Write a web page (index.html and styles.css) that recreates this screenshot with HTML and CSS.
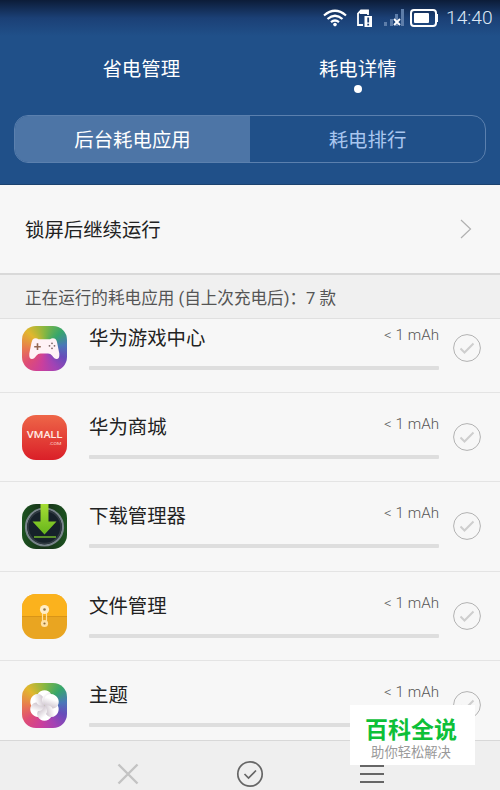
FILE: index.html
```html
<!doctype html>
<html lang="zh-CN">
<head>
    <meta charset="utf-8">
    <title>耗电详情</title>
    <link rel="stylesheet" href="styles.css">
</head>
<body>
    <header>
        <div class="status">
            <svg class="wifi" width="24" height="18" viewBox="0 0 24 18" fill="none" stroke="#fff" stroke-width="2.2">
                <path d="M1 6.5Q12 -3 23 6.5M4.5 10Q12 3.5 19.5 10M8 13.2Q12 9.8 16 13.2"/>
                <circle cx="12" cy="15.6" r="1.8" fill="#fff" stroke="none"/>
            </svg>
            <svg class="sim" width="17" height="19" viewBox="0 0 17 19">
                <path d="M7 16H2V4.5L5 1.5H12V6" fill="none" stroke="#fff" stroke-width="1.8"/>
                <path d="M4 1H12.5V5H4z" fill="#fff"/>
                <path d="M8.5 7H16V18H8.5z" fill="#fff"/>
                <path d="M12.2 8.5V13.5M12.2 14.8V16.6" stroke="#1b3e70" stroke-width="1.8"/>
            </svg>
            <svg class="signal" width="21" height="18" viewBox="0 0 21 18">
                <path d="M0 13H3V17H0zM6 10H9V17H6zM11 5H14V17H11zM17 0H20V17H17z" fill="#5d7da9"/>
                <path d="M10 10L16 16M16 10L10 16" stroke="#fff" stroke-width="1.8"/>
            </svg>
            <svg class="battery" width="29" height="18" viewBox="0 0 29 18">
                <rect x="1" y="1" width="25" height="16" rx="3" fill="none" stroke="#fff" stroke-width="2"/>
                <rect x="4" y="4" width="15" height="10" rx="1" fill="#fff"/>
                <path d="M26 5H28V13H26z" fill="#fff"/>
            </svg>
            <span class="clock">14:40</span>
        </div>
        <nav class="tabs">
            <a>省电管理</a>
            <a class="current">耗电详情</a>
        </nav>
        <div class="switch">
            <span class="on">后台耗电应用</span>
            <span>耗电排行</span>
        </div>
    </header>

    <div class="setting">
        <span>锁屏后继续运行</span>
        <svg width="12" height="20" viewBox="0 0 12 20" fill="none" stroke="#b0b0b0" stroke-width="1.2"><path d="M1 1L10.5 10L1 19"/></svg>
    </div>
    <h2>正在运行的耗电应用 (自上次充电后)：7 款</h2>

    <ul class="apps">
        <li>
            <svg class="icon" viewBox="0 0 45 45">
                <foreignObject width="45" height="45"><div class="rainbow"></div></foreignObject>
                <path d="M12 12.5Q14.5 11.8 16.5 13.2H28Q30 11.8 32.5 12.5Q34.5 13 35.2 17L37.3 27.5Q37.8 33 34.5 33Q32.5 33 30 29.5Q28.5 27.5 26 27.5H18.5Q16 27.5 14.5 29.5Q12 33 10 33Q6.8 33 7.3 27.5L9.5 16.5Q10.2 13 12 12.5z" fill="#fff2f6"/>
                <path d="M15.5 17.3V24M12.2 20.7H18.8" stroke="#926652" stroke-width="1.6"/>
                <g fill="#7c6464"><circle cx="30" cy="17.3" r=".9"/><circle cx="30" cy="22.3" r=".9"/><circle cx="27.5" cy="19.8" r=".9"/><circle cx="32.5" cy="19.8" r=".9"/></g>
            </svg>
            <div class="info">
                <h3>华为游戏中心</h3><em>&lt; 1 mAh</em>
                <div class="bar"></div>
            </div>
            <svg class="check" viewBox="0 0 28 28"><circle cx="14" cy="14" r="13.4"/><path d="M7.5 14.5L11.5 18.5L20.5 9.5"/></svg>
        </li>
        <li>
            <svg class="icon" viewBox="0 0 45 45">
                <defs><linearGradient id="red" x2="0" y2="1"><stop stop-color="#ee6648"/><stop offset="1" stop-color="#da1f28"/></linearGradient></defs>
                <rect width="45" height="45" fill="url(#red)"/>
                <text x="4.8" y="23.2" font-size="9" font-weight="500" textLength="35.5" lengthAdjust="spacingAndGlyphs" fill="#ffe9e2">VMALL</text>
                <text x="27" y="29.8" font-size="4.2" textLength="12.5" lengthAdjust="spacingAndGlyphs" fill="#ffd5cc">.COM</text>
            </svg>
            <div class="info">
                <h3>华为商城</h3><em>&lt; 1 mAh</em>
                <div class="bar"></div>
            </div>
            <svg class="check" viewBox="0 0 28 28"><circle cx="14" cy="14" r="13.4"/><path d="M7.5 14.5L11.5 18.5L20.5 9.5"/></svg>
        </li>
        <li>
            <svg class="icon" viewBox="0 0 45 45">
                <defs>
                    <linearGradient id="green" x2="0" y2="1"><stop stop-color="#a5dd35"/><stop offset="1" stop-color="#66b51b"/></linearGradient>
                    <linearGradient id="moss"><stop stop-color="#1c5320"/><stop offset=".5" stop-color="#183019"/><stop offset="1" stop-color="#1c5320"/></linearGradient>
                </defs>
                <rect width="45" height="45" fill="url(#moss)"/>
                <circle cx="22.5" cy="23" r="18.5" fill="#16212a" stroke="#78848a" stroke-width="2.2"/>
                <circle cx="22.5" cy="23" r="16.5" fill="none" stroke="#303a41" stroke-width="1.5"/>
                <path d="M18.5 0H26.5V17.5H34.5L22.5 30.5L10.5 17.5H18.5z" fill="url(#green)"/>
                <path d="M12 33H34" stroke="#71b52c" stroke-width="1.5"/>
            </svg>
            <div class="info">
                <h3>下载管理器</h3><em>&lt; 1 mAh</em>
                <div class="bar"></div>
            </div>
            <svg class="check" viewBox="0 0 28 28"><circle cx="14" cy="14" r="13.4"/><path d="M7.5 14.5L11.5 18.5L20.5 9.5"/></svg>
        </li>
        <li>
            <svg class="icon" viewBox="0 0 45 45">
                <rect width="45" height="45" fill="#e9a521"/>
                <rect width="45" height="22" fill="#fbb21d"/>
                <path d="M0 22.5H45" stroke="#d99518"/>
                <path d="M20.5 16V29M24.5 16V29" stroke="#ffe0a0" stroke-width="1.2"/>
                <circle cx="22.5" cy="15.5" r="4.6" fill="#ffedc6"/>
                <circle cx="22.5" cy="29.5" r="3.6" fill="#ffe1a4"/>
                <circle cx="22.5" cy="15.5" r="1.3" fill="#8d7650"/>
                <circle cx="22.5" cy="29.5" r="1.1" fill="#8d6c3b"/>
            </svg>
            <div class="info">
                <h3>文件管理</h3><em>&lt; 1 mAh</em>
                <div class="bar"></div>
            </div>
            <svg class="check" viewBox="0 0 28 28"><circle cx="14" cy="14" r="13.4"/><path d="M7.5 14.5L11.5 18.5L20.5 9.5"/></svg>
        </li>
        <li>
            <svg class="icon" viewBox="0 0 45 45">
                <defs>
                    <linearGradient id="petal" x1="0" y1="0" x2=".9" y2="1"><stop stop-color="#fff"/><stop offset=".4" stop-color="#fff"/><stop offset="1" stop-color="#bcaebb"/></linearGradient>
                    <path id="leaf" d="M22.5 22.5C16 21 13 16 15.5 11.5C18.5 6 26.5 6 29 11C30.2 13.5 30 15.5 29 17C26.5 16.5 23.5 18.5 22.5 22.5z" fill="url(#petal)"/>
                </defs>
                <foreignObject width="45" height="45"><div class="rainbow"></div></foreignObject>
                <use href="#leaf"/>
                <use href="#leaf" transform="rotate(-60 22.5 22.5)"/>
                <use href="#leaf" transform="rotate(-120 22.5 22.5)"/>
                <use href="#leaf" transform="rotate(-180 22.5 22.5)"/>
                <use href="#leaf" transform="rotate(-240 22.5 22.5)"/>
                <use href="#leaf" transform="rotate(-300 22.5 22.5)"/>
            </svg>
            <div class="info">
                <h3>主题</h3><em>&lt; 1 mAh</em>
                <div class="bar"></div>
            </div>
            <svg class="check" viewBox="0 0 28 28"><circle cx="14" cy="14" r="13.4"/><path d="M7.5 14.5L11.5 18.5L20.5 9.5"/></svg>
        </li>
    </ul>

    <footer>
        <svg width="22" height="28" viewBox="0 0 22 28" fill="none" stroke="#c3c3c3" stroke-width="2.4"><path d="M1.5 4.5L20.5 23.5M20.5 4.5L1.5 23.5"/></svg>
        <svg width="28" height="28" viewBox="0 0 28 28" fill="none" stroke="#666" stroke-width="1.7"><circle cx="14" cy="14" r="12.2"/><path d="M8.5 14L12.5 18L20 10.5"/></svg>
        <svg width="24" height="28" viewBox="0 0 24 28" stroke="#666" stroke-width="2"><path d="M0 6H24M0 14H24M0 22H24"/></svg>
    </footer>

    <div class="watermark">
        <strong>百科全说</strong>
        <span>助你轻松解决</span>
    </div>
</body>
</html>
```

FILE: styles.css
```css
* {
    margin: 0;
    padding: 0;
    box-sizing: border-box;
}

body {
    display: flex;
    flex-direction: column;
    position: relative;
    width: 500px;
    height: 790px;
    overflow: hidden;
    background: #f7f7f7;
    color: #222;
    font: 19.4px/28px Roboto, "Noto Sans CJK SC", sans-serif;
}

header {
    height: 185px;
    background: linear-gradient(#0c1c38, #1b4076 18px, #205089 36px);
    border-bottom: 1px solid #1b426f;
    color: #fff;
}

.status {
    display: flex;
    align-items: center;
    justify-content: flex-end;
    height: 36px;
    padding-right: 8px;
}

.sim {
    margin-left: 9px;
}

.signal {
    margin-left: 11px;
}

.battery {
    margin-left: 5px;
}

.clock {
    width: 46px;
    margin-left: 7px;
    font-size: 19.2px;
    font-weight: 300;
    color: #dce7f5;
}

.tabs {
    display: flex;
    height: 79px;
    padding: 20px 34px 0 33px;
}

.tabs a {
    flex: 1;
    text-align: center;
}

.tabs .current::after {
    content: "";
    display: block;
    width: 8px;
    height: 8px;
    margin: 1px auto 0;
    border-radius: 50%;
    background: #fff;
}

.switch {
    display: flex;
    width: 472px;
    height: 48px;
    margin: 0 auto;
    border: 1px solid #5b80ae;
    border-radius: 14px;
    overflow: hidden;
    line-height: 49px;
    text-align: center;
}

.switch span {
    flex: 1;
    color: #a9c6ef;
}

.switch .on {
    background: #4d75a6;
    color: #fff;
}

.setting {
    display: flex;
    align-items: center;
    justify-content: space-between;
    height: 90px;
    padding: 0 28px 0 25px;
    border-bottom: 2px solid #d9d9d9;
}

.setting span {
    padding-top: 4px;
}

h2 {
    height: 44px;
    padding-left: 25px;
    background: #f0f0f0;
    border-bottom: 1px solid #e0e0e0;
    color: #555;
    font-size: 16.6px;
    font-weight: 400;
    line-height: 47px;
}

.apps {
    height: 421px;
    overflow: hidden;
    list-style: none;
}

.apps li {
    display: flex;
    height: 89.4px;
    padding: 22px 19px 0 22px;
    border-bottom: 1px solid #e4e4e4;
}

/* list is scrolled a little under the heading */
.apps li:first-child {
    margin-top: -15.4px;
}

.icon {
    width: 45px;
    height: 45px;
    border-radius: 14px;
}

.rainbow {
    height: 45px;
    background: conic-gradient(from 0deg, #87b741, #36a66c 45deg, #4a78b8 80deg, #684cba 115deg, #a143b5 150deg, #cb3f9c 190deg, #de4c77 230deg, #e87950 270deg, #e2b72e 315deg, #87b741);
}

.info {
    display: flex;
    flex-wrap: wrap;
    justify-content: space-between;
    align-content: flex-start;
    width: 350px;
    margin: -1px 14px 0 22px;
}

h3 {
    height: 41px;
    font-size: 19.4px;
    font-weight: 400;
}

em {
    margin-top: -2px;
    color: #555;
    font-size: 15.2px;
    font-style: normal;
    font-weight: 300;
    line-height: 24px;
}

.bar {
    width: 100%;
    height: 4px;
    background: #dedede;
    border-radius: 1px;
}

.check {
    width: 28px;
    height: 28px;
    margin-top: 8px;
    fill: none;
    stroke: #b2b2b2;
}

.check path {
    stroke: #cecece;
    stroke-width: 2;
}

footer {
    display: flex;
    justify-content: space-between;
    height: 50px;
    padding: 19px 116px 0 117px;
    background: #efefef;
    border-top: 1px solid #d8d8d8;
}

.watermark {
    position: absolute;
    left: 350px;
    top: 705px;
    width: 125px;
    height: 60px;
    padding: 12px 3px 0 0;
    background: #fff;
    text-align: center;
}

.watermark strong {
    display: block;
    color: #0dc038;
    font-size: 23px;
    font-weight: 700;
    line-height: 28px;
}

.watermark span {
    display: block;
    color: #999;
    font-size: 13.3px;
    line-height: 16px;
}
```
